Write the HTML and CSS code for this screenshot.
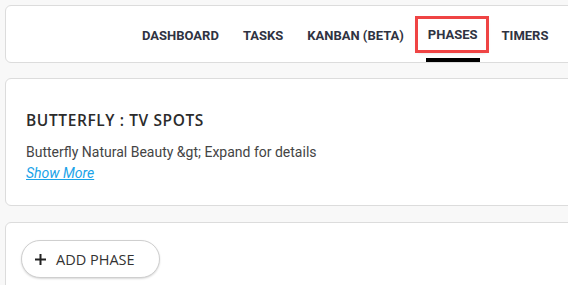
FILE: index.html
```html
<!DOCTYPE html>
<html>
<head>
<meta charset="utf-8">
<link rel="stylesheet" href="styles.css">
</head>
<body>
<div class="page">
  <header class="card nav-card">
    <nav class="nav">
      <a class="nav-item">DASHBOARD</a>
      <a class="nav-item">TASKS</a>
      <a class="nav-item">KANBAN (BETA)</a>
      <a class="nav-item active"><span class="hl">PHASES</span></a>
      <a class="nav-item">TIMERS</a>
    </nav>
  </header>
  <section class="card info-card">
    <h1 class="title">BUTTERFLY : TV SPOTS</h1>
    <p class="desc">Butterfly Natural Beauty &amp;gt; Expand for details</p>
    <a class="more">Show More</a>
  </section>
  <section class="card phase-card">
    <button class="add-btn">
      <svg class="plus" width="13" height="13" viewBox="0 0 13 13"><path d="M6.5 1v11M1 6.5h11" stroke="#222" stroke-width="2"/></svg>
      <span>ADD PHASE</span>
    </button>
  </section>
</div>
</body>
</html>
```
FILE: styles.css
```css
html, body {
  margin: 0;
  padding: 0;
  background: #f8f8f8;
  overflow: hidden;
}
.page {
  width: 600px;
  padding: 5px 0 0 5px;
  display: flex;
  flex-direction: column;
}
.card {
  background: #fff;
  border: 1px solid #dcdcdc;
  border-radius: 6px;
}
.nav-card {
  height: 58px;
  box-sizing: border-box;
}
.nav {
  display: flex;
  padding-left: 124px;
  height: 100%;
}
.nav-item {
  font-family: Roboto, "Liberation Sans", sans-serif;
  font-weight: 700;
  font-size: 13px;
  color: #2f3342;
  display: flex;
  align-items: center;
  padding: 3px 12px 0 12px;
  position: relative;
}
.nav-item.active .hl {
  outline: 3px solid #ef4444;
  padding: 8px 8px 8px 10px;
  margin: -3px -8px 0 -10px;
  box-shadow: 0 2px 4px rgba(0,0,0,0.25);
}
.nav-item.active::after {
  content: "";
  position: absolute;
  left: 10px;
  right: 10px;
  bottom: 0;
  height: 4px;
  background: #000;
}
.info-card {
  margin-top: 15px;
  height: 128px;
  box-sizing: border-box;
  padding: 31px 20px 0 20px;
}
.title {
  margin: 0;
  font-family: "Open Sans", sans-serif;
  font-weight: 600;
  font-size: 15.5px;
  letter-spacing: 0.6px;
  color: #2b2b2b;
  line-height: 20px;
}
.desc {
  margin: 12px 0 0 0;
  font-family: Roboto, sans-serif;
  font-size: 14px;
  color: #444;
  line-height: 20px;
}
.more {
  display: block;
  margin-top: 0;
  font-family: Roboto, sans-serif;
  font-style: italic;
  font-size: 14px;
  color: #1aa3e8;
  text-decoration: underline;
  line-height: 22px;
}
.phase-card {
  margin-top: 16px;
  height: 120px;
  padding: 17px 0 0 15px;
}
.add-btn {
  display: flex;
  align-items: center;
  gap: 9px;
  width: 139px;
  height: 38px;
  border: 1px solid #cfcfcf;
  border-radius: 19px;
  background: #fff;
  box-shadow: 0 1px 2px rgba(0,0,0,0.15);
  padding: 0 0 0 12px;
  font-family: "Open Sans", sans-serif;
  font-size: 14.5px;
  color: #333;
}
```
